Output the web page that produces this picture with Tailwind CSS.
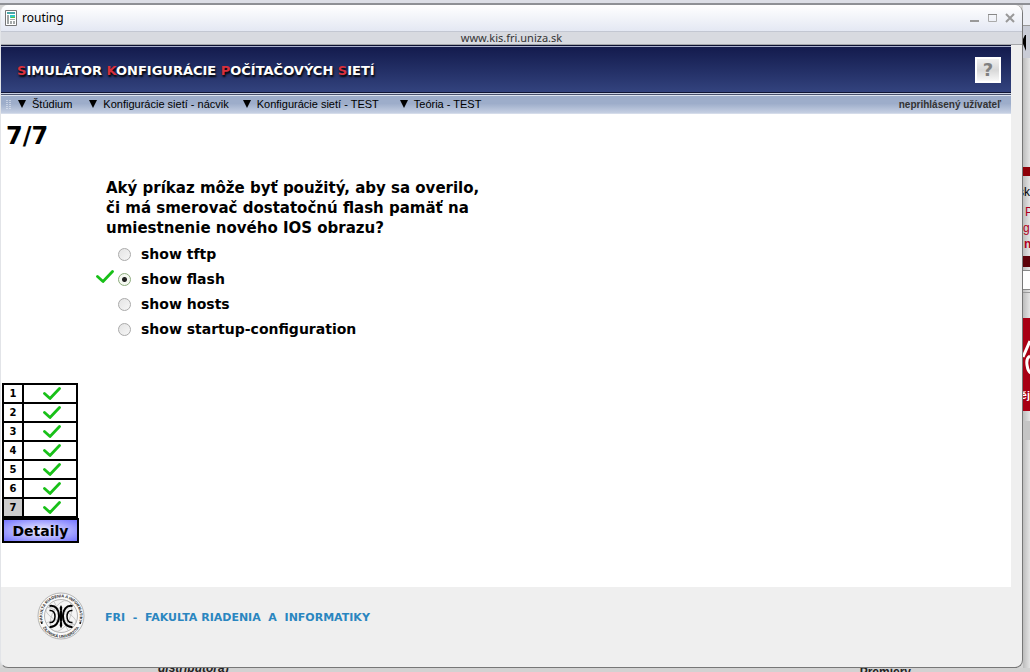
<!DOCTYPE html>
<html lang="sk">
<head>
<meta charset="utf-8">
<title>routing</title>
<script src="https://cdn.jsdelivr.net/npm/@tailwindcss/browser@4"></script>
</head>
<body class="flex min-h-screen flex-col overflow-hidden bg-[#dedede] font-['DejaVu_Sans',sans-serif] text-black">
<svg class="hidden" aria-hidden="true">
  <symbol id="check" viewBox="0 0 18 14"><path d="M1.500 6.500 7 11.500 16.500 1.500" fill="none" stroke="#18c018" stroke-width="2.800" stroke-linecap="round" stroke-linejoin="round"/></symbol>
  <symbol id="drop" viewBox="0 0 8 8"><path d="M0 0h8L4 8z" fill="#000"/></symbol>
</svg>
<div class="h-[5px] shrink-0 border-b-2 border-[#8e9095] bg-[#dcdee6]"></div>
<div class="flex flex-1 bg-[#d6d6d6]">
  <!-- pop-up window -->
  <div class="flex min-w-0 flex-1 flex-col overflow-hidden rounded-lg border-r border-b border-l border-r-[#777] border-b-[#777] border-l-[#e2e4e8] bg-[#efefef]">
    <div class="flex h-[26px] items-center bg-linear-to-b from-white to-[#e4e8f3] pr-[7px] pl-1">
      <svg class="h-4 w-3" viewBox="0 0 12 16" aria-hidden="true"><path d="M.5.5h11v15H.5z" fill="#fff" stroke="#777"/><path d="M2 2h8v2H2z" fill="#4aa6a8"/><path d="M2 5h2v9H2z" fill="#a0a4a4"/><path d="M5 5h5v3H5z" fill="#30c8c8"/><path d="M6 7h4v1H6z" fill="#5fc040"/><path d="M5 9h5v1H5zM5 11h2v3H5zM8 11h2v3H8z" fill="#a6aaaa"/></svg>
      <h1 class="flex-1 pl-[5px] font-['Noto_Sans',sans-serif] text-xs">routing</h1>
      <div class="flex items-center gap-2">
        <button aria-label="Minimalizovať"><svg class="h-3 w-[10px]" viewBox="0 0 10 12"><path d="M1 8h9v2H1z" fill="#999"/></svg></button>
        <button aria-label="Maximalizovať"><svg class="h-3 w-[10px]" viewBox="0 0 10 12"><path d="M1.500 2.500h8v7h-8z" fill="none" stroke="#aaa"/><path d="M1 2h9v1H1z" fill="#888"/></svg></button>
        <button aria-label="Zavrieť"><svg class="h-3 w-[10px]" viewBox="0 0 10 12"><path d="m1 2 8 8M9 2l-8 8" stroke="#999" stroke-width="2"/></svg></button>
      </div>
    </div>
    <div class="flex h-[14px] items-center justify-center border-t border-b border-t-[#c3c7d2] border-b-[#a4a6aa] bg-[#d8dae0] font-['Noto_Sans',sans-serif] text-[11px] leading-3 text-[#333]">www.kis.fri.uniza.sk</div>
    <div class="mr-[11px] flex flex-1 flex-col bg-white">
      <header class="flex h-12 items-center justify-between border-t border-b border-t-[#0b1030] border-b-[#101635] bg-linear-to-b from-[#131a4c] to-[#33437e] pr-[10px] pl-4 shadow-[inset_0_1px_#a7aecb]">
        <div class="pt-1 text-[13px] leading-4 font-bold whitespace-nowrap text-white [text-shadow:1px_2px_2px_#000]"><span class="text-[#d8303c]">S</span>IMULÁTOR <span class="text-[#d8303c]">K</span>ONFIGURÁCIE <span class="text-[#d8303c]">P</span>OČÍTAČOVÝCH <span class="text-[#d8303c]">S</span>IETÍ</div>
        <button aria-label="Pomoc" class="mt-px size-[26px] border-2 border-white bg-linear-to-b from-[#f0f0f0] via-[#d8d8d8] to-[#f8f8f8] text-lg leading-none font-bold text-[#808080]">?</button>
      </header>
      <nav class="flex h-[21px] items-center border-t border-b border-t-[#c9d0e2] border-b-[#d5dcea] bg-linear-to-b from-[#9dadca] from-50% to-[#c6d0e3] pt-px pr-[10px] pl-[5px] font-['Liberation_Sans',sans-serif] text-[11px] shadow-[inset_0_1px_#4c5470,inset_0_2px_#dfe5f1]">
        <svg class="mr-[7px] h-[9px] w-[5px]" viewBox="0 0 5 9" aria-hidden="true"><path d="M1 0v9M4 0v9" stroke="#eef2fa" stroke-dasharray="1 1"/></svg>
        <a href="#" class="mr-[17px] flex items-center gap-[6px]"><svg class="size-2"><use href="#drop"/></svg>Štúdium</a>
        <a href="#" class="mr-[14px] flex items-center gap-[6px]"><svg class="size-2"><use href="#drop"/></svg>Konfigurácie sietí - nácvik</a>
        <a href="#" class="mr-[21px] flex items-center gap-[6px]"><svg class="size-2"><use href="#drop"/></svg>Konfigurácie sietí - TEST</a>
        <a href="#" class="flex items-center gap-[6px]"><svg class="size-2"><use href="#drop"/></svg>Teória - TEST</a>
        <span class="ml-auto text-[10px] font-bold text-[#333]">neprihlásený užívateľ</span>
      </nav>
      <main>
        <h2 class="pt-2 pl-[5px] text-2xl leading-7 font-bold">7/7</h2>
        <form class="pt-7 pl-[95px]">
          <fieldset>
            <legend class="pl-[10px] text-[15px] leading-5 font-bold">Aký príkaz môže byť použitý, aby sa overilo,<br>či má smerovač dostatočnú flash pamäť na<br>umiestnenie nového IOS obrazu?</legend>
            <div class="grid grid-cols-[18px_auto_1fr] items-center gap-x-1 pt-1 text-[14px] leading-[25px] font-bold">
              <span></span><input id="a" name="q" type="radio" class="size-[13px] appearance-none rounded-full border border-[#aaa] bg-linear-to-br from-[#e4e4e4] to-[#f6f6f6]"><label for="a" class="pl-[6px]">show tftp</label>
              <svg class="mt-[3px] h-[14px] w-[18px] self-start" role="img" aria-label="správne"><use href="#check"/></svg><input id="b" name="q" type="radio" checked class="size-[13px] appearance-none rounded-full border border-[#8cab7c] bg-[radial-gradient(circle,#222_0_2px,#f4f8f0_3px)]"><label for="b" class="pl-[6px]">show flash</label>
              <span></span><input id="c" name="q" type="radio" class="size-[13px] appearance-none rounded-full border border-[#aaa] bg-linear-to-br from-[#e4e4e4] to-[#f6f6f6]"><label for="c" class="pl-[6px]">show hosts</label>
              <span></span><input id="d" name="q" type="radio" class="size-[13px] appearance-none rounded-full border border-[#aaa] bg-linear-to-br from-[#e4e4e4] to-[#f6f6f6]"><label for="d" class="pl-[6px]">show startup-configuration</label>
            </div>
          </fieldset>
        </form>
        <table class="mt-[41px] ml-px w-[76px] table-fixed border-collapse border-2 border-black text-[10px] leading-none font-bold [&_td]:h-[19px] [&_td]:border-2 [&_td]:border-black [&_td]:py-0 [&_td]:pr-0 [&_td]:pl-[3px] [&_th]:h-[19px] [&_th]:w-5 [&_th]:border-2 [&_th]:border-black [&_th]:p-0">
          <tr><th>1</th><td><svg class="mx-auto h-[14px] w-[18px]"><use href="#check"/></svg></td></tr>
          <tr><th>2</th><td><svg class="mx-auto h-[14px] w-[18px]"><use href="#check"/></svg></td></tr>
          <tr><th>3</th><td><svg class="mx-auto h-[14px] w-[18px]"><use href="#check"/></svg></td></tr>
          <tr><th>4</th><td><svg class="mx-auto h-[14px] w-[18px]"><use href="#check"/></svg></td></tr>
          <tr><th>5</th><td><svg class="mx-auto h-[14px] w-[18px]"><use href="#check"/></svg></td></tr>
          <tr><th>6</th><td><svg class="mx-auto h-[14px] w-[18px]"><use href="#check"/></svg></td></tr>
          <tr><th class="bg-[#ccc]">7</th><td><svg class="mx-auto h-[14px] w-[18px]"><use href="#check"/></svg></td></tr>
        </table>
        <button class="ml-px h-[25px] w-[77px] border-2 border-black bg-[radial-gradient(ellipse,#f0f0ff,#7474ff)] text-[14px] leading-none font-bold">Detaily</button>
      </main>
    </div>
    <footer class="flex h-20 items-start gap-5 pt-[5px] pl-9">
      <svg class="size-12" viewBox="0 0 48 48" role="img" aria-label="Fakulta riadenia a informatiky">
        <defs><path id="ringTop" d="M6.300 30.500A18.800 18.800 0 1 1 41.700 30.500"/><path id="ringBottom" d="M5 34.500A21.700 21.700 0 0 0 43 34.500"/></defs>
        <circle cx="24" cy="24" r="23" fill="#fafafa" stroke="#999" stroke-width=".7"/>
        <circle cx="24" cy="24" r="16.500" fill="#f5f5f5" stroke="#999" stroke-width=".7"/>
        <g fill="none" stroke="#b4b4b4" stroke-width=".6"><ellipse cx="24" cy="24" rx="9" ry="16.500" transform="rotate(25 24 24)"/><ellipse cx="24" cy="24" rx="16.500" ry="6" transform="rotate(25 24 24)"/><path d="M11 15q13 8 26-2M9 31q15-8 29 2M17 9.500l14 29"/></g>
        <g fill="none" stroke="#000"><path d="M12.500 14C19 13 22 18 22 24S19 35.500 12.500 35" stroke-width="2"/><path d="M35.500 14C29 13 26 18 26 24s3 11.500 9.500 11" stroke-width="2"/><path d="M12.500 18.500C16.500 18 18 21 18 24.500S16.500 31 12.500 30.500M35.500 18.500C31.500 18 30 21 30 24.500s1.500 6.500 5.500 6" stroke-width="1.500"/></g>
        <path d="M24 13l1.300 2.500-.5 3 1.200 6-1.200 5 .5 4L24 36.500l-1.300-3 .5-4-1.200-5 1.200-6-.5-3z"/>
        <g font-family="Liberation Sans, sans-serif" font-size="4" font-weight="bold" fill="#222" text-anchor="middle"><text><textPath href="#ringTop" startOffset="50%">FAKULTA RIADENIA A INFORMATIKY</textPath></text><text><textPath href="#ringBottom" startOffset="50%">ŽILINSKÁ UNIVERZITA</textPath></text></g>
        <circle cx="4.800" cy="31" r=".9"/><circle cx="43.200" cy="31" r=".9"/>
      </svg>
      <p class="pt-[18px] text-[11px] leading-4 font-bold whitespace-pre text-[#2a86c0]">FRI  -  FAKULTA RIADENIA  A  INFORMATIKY</p>
    </footer>
  </div>
  <!-- visible edge of the page behind the window -->
  <div class="w-[7px] shrink-0 overflow-hidden bg-linear-to-r from-[#bdbdbd] to-[#e4e4e4] font-['Liberation_Sans',sans-serif] text-xs leading-4 whitespace-nowrap">
    <div class="h-5 bg-[#eceef4]"></div>
    <div class="h-[33px] border-t border-[#999] bg-[#c9ccd6] pt-[9px]"><svg class="h-4 w-[3px]" viewBox="0 0 3 16"><path d="M3 0v16L0 9V4L2 0z"/></svg></div>
    <div class="h-[109px]"></div>
    <div class="h-[9px] bg-[#8e0008]"></div>
    <div class="flex h-20 flex-col items-end pt-2 text-[#b00020]">
      <span class="text-black">sk</span><span class="mt-1 w-[5px]">P</span><span class="w-[7px]">gi</span><span class="w-[6px] font-bold">n</span>
    </div>
    <div class="h-[11px] bg-[#5c0008]"></div>
    <div class="mt-[3px] h-5 border-y border-[#888] bg-white"></div>
    <div class="mt-[2px] h-[26px] border-t border-[#999]"></div>
    <div class="flex h-[93px] flex-col items-end justify-between bg-[#a80014] pt-[22px] pb-2 text-[11px] font-bold text-white">
      <svg class="h-9 w-[7px]" viewBox="0 0 7 36" fill="none" stroke="#fff"><path d="M0 17 7 1" stroke-width="3"/><path d="M7 16Q3 18 4 25T8 33" stroke-width="3"/></svg>
      <span>ěj</span>
    </div>
    <div class="mt-[10px] h-[19px] bg-[#c4c4c4]"></div>
  </div>
</div>
<div class="flex h-1 shrink-0 justify-between overflow-hidden bg-[#d2d2d2] pr-[119px] pl-[158px] font-['Liberation_Sans',sans-serif] text-xs leading-[8px] font-bold text-[#222]"><span class="-mt-1 italic">distributora)</span><span>Premiery</span></div>
</body>
</html>
